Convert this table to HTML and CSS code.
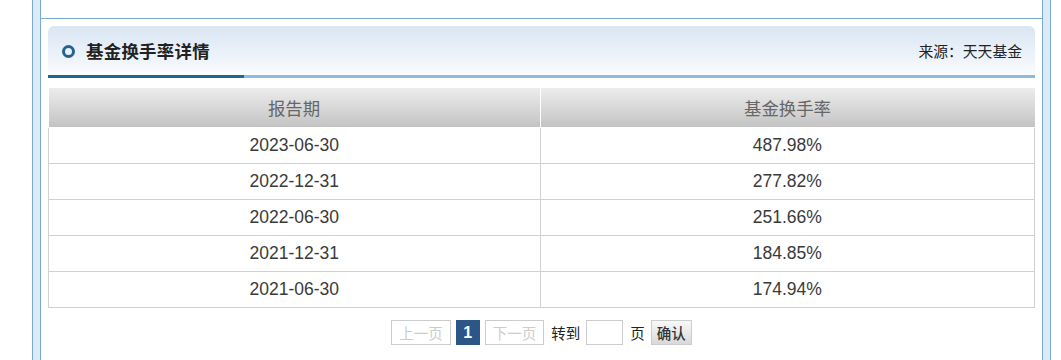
FILE: index.html
```html
<!DOCTYPE html>
<html lang="zh-CN">
<head>
<meta charset="utf-8">
<title>基金换手率详情</title>
<link rel="stylesheet" href="styles.css">
</head>
<body>
<div class="page">
  <div class="side"></div>
  <div class="main">
    <div class="prev"></div>
    <div class="section">
      <div class="box-head">
        <div class="title">
          <span class="dot"></span>
          <span class="title-text">基金换手率详情</span>
        </div>
        <div class="source">来源：天天基金</div>
        <span class="head-accent"></span>
      </div>
      <table class="grid">
        <thead>
          <tr><th class="c1">报告期</th><th>基金换手率</th></tr>
        </thead>
        <tbody>
          <tr><td>2023-06-30</td><td>487.98%</td></tr>
          <tr><td>2022-12-31</td><td>277.82%</td></tr>
          <tr><td>2022-06-30</td><td>251.66%</td></tr>
          <tr><td>2021-12-31</td><td>184.85%</td></tr>
          <tr><td>2021-06-30</td><td>174.94%</td></tr>
        </tbody>
      </table>
      <div class="pager">
        <span class="pbtn disabled">上一页</span>
        <span class="pbtn current">1</span>
        <span class="pbtn disabled">下一页</span>
        <span class="ptext">转到</span>
        <span class="pinput"></span>
        <span class="ptext">页</span>
        <span class="pgo">确认</span>
      </div>
    </div>
  </div>
  <div class="side"></div>
</div>
</body>
</html>
```
FILE: styles.css
```css
html, body {
  margin: 0;
  padding: 0;
  background: #fff;
}
body {
  font-family: "Liberation Sans", "Noto Sans CJK SC", Arial, sans-serif;
  color: #333;
}
.page {
  display: flex;
  margin-left: 32px;
  width: 1019px;
  height: 360px;
  overflow: hidden;
}
.side {
  width: 7px;
  flex: 0 0 7px;
  background: #dce9f6;
  border-left: 1px solid #77acd0;
  border-right: 1px solid #77acd0;
  height: 360px;
}
.main {
  width: 1001px;
  flex: 0 0 1001px;
}
.prev {
  height: 18px;
  border-bottom: 1px solid #77acd0;
}
.section {
  padding: 7px 7px 0 7px;
}
.box-head {
  position: relative;
  height: 49px;
  border-bottom: 3px solid #8dbbdf;
  border-radius: 6px 6px 0 0;
  background: linear-gradient(to bottom, #dae6f3 0%, #eaf1f9 55%, #fafcfe 100%);
  display: flex;
  align-items: center;
  justify-content: space-between;
}
.head-accent {
  position: absolute;
  left: 0;
  bottom: -3px;
  width: 196px;
  height: 3px;
  background: #1f6690;
}
.title {
  display: flex;
  align-items: center;
  padding-left: 14px;
}
.dot {
  width: 7px;
  height: 7px;
  border: 3px solid #236392;
  border-radius: 50%;
  margin-right: 11px;
  margin-top: 1px;
}
.title-text {
  font-family: "Noto Sans CJK SC", sans-serif;
  font-size: 17.4px;
  font-weight: bold;
  color: #222;
  letter-spacing: 0.3px;
}
.source {
  font-family: "Noto Sans CJK SC", sans-serif;
  font-size: 14.8px;
  color: #222;
  padding-right: 13px;
}
.grid {
  margin-top: 10px;
  width: 987px;
  border-collapse: collapse;
  table-layout: fixed;
}
.grid th {
  height: 39px;
  padding: 0;
  font-family: "Noto Sans CJK SC", sans-serif;
  font-weight: normal;
  font-size: 17.4px;
  color: #666;
  background: linear-gradient(to bottom, #ececec 0%, #d6d6d6 55%, #c3c3c3 100%);
  border-right: 1px solid #fff;
  border-bottom: 1px solid #fff;
}
.grid th:last-child {
  border-right: none;
}
.grid th.c1 {
  width: 491px;
}
.grid td {
  height: 35px;
  padding: 0;
  text-align: center;
  font-size: 17.5px;
  color: #3a3a3a;
  border: 1px solid #d0d0d0;
}
.pager {
  display: flex;
  justify-content: center;
  align-items: center;
  margin-top: 12px;
  font-family: "Noto Sans CJK SC", sans-serif;
  font-size: 14.5px;
}
.pbtn {
  height: 23px;
  line-height: 23px;
  border: 1px solid #ccc;
  padding: 0 7px;
  margin-right: 5px;
  color: #333;
}
.pbtn.disabled {
  color: #ccc;
}
.pbtn.current {
  background: #2c5685;
  border-color: #2c5685;
  color: #fff;
  font-family: "Liberation Sans", sans-serif;
  font-weight: bold;
  font-size: 16px;
  width: 22px;
  padding: 0;
  text-align: center;
}
.ptext {
  margin: 0 6px 0 2px;
  color: #222;
}
.pinput {
  width: 35px;
  height: 23px;
  border: 1px solid #ccc;
  margin-right: 5px;
}
.pgo {
  height: 23px;
  line-height: 23px;
  border: 1px solid #ccc;
  padding: 0 5px;
  background: linear-gradient(to bottom, #f8f8f8 0%, #e6e6e6 60%, #d8d8d8 100%);
  color: #333;
  font-weight: 500;
}
```
